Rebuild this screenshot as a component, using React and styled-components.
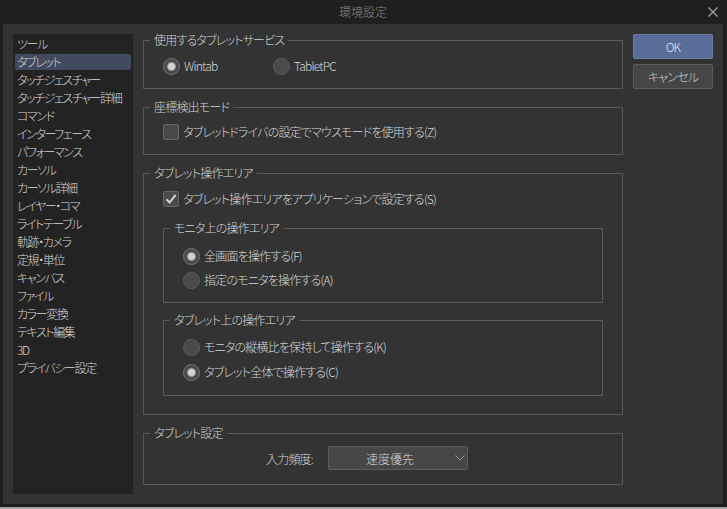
import React from "react";
import styled, { createGlobalStyle } from "styled-components";

const GlobalStyle = createGlobalStyle`
  html, body { margin: 0; padding: 0; background: #a4a4a4; }
  body {
    font-family: "Noto Sans CJK JP", "Noto Sans", sans-serif;
    font-size: 12px;
    font-weight: 300;
    font-feature-settings: "palt";
    letter-spacing: -0.8px;
    color: #d4d4d4;
  }
  * { box-sizing: border-box; }
`;

const Window = styled.div`
  width: 727px;
  height: 507px;
  background: #1f1f1f;
  padding: 0 4px 3px 3px;
  display: flex;
  flex-direction: column;
`;

const TitleBar = styled.div`
  height: 24px;
  display: grid;
  grid-template-columns: 1fr auto 1fr;
  align-items: center;
`;

const Title = styled.div`
  grid-column: 2;
  color: #8a8a8a;
  font-size: 12px;
  line-height: 24px;
  letter-spacing: 0;
`;

const CloseButton = styled.div`
  grid-column: 3;
  justify-self: end;
  width: 20px;
  height: 24px;
  display: flex;
  align-items: center;
  justify-content: center;
`;

const Body = styled.div`
  flex: 1;
  background: #333333;
  display: flex;
  gap: 10px;
  padding: 8px 10px 10px 10px;
`;

const Sidebar = styled.div`
  width: 120px;
  flex-shrink: 0;
  margin-top: 2px;
  background: #232323;
  display: flex;
  flex-direction: column;
  gap: 2px;
  padding-top: 2px;
`;

const NavItem = styled.div`
  height: 16px;
  line-height: 16px;
  margin: 0 2px;
  padding-left: 2px;
  border-radius: 2px;
  white-space: nowrap;
  letter-spacing: -1.4px;
  color: #d8d8d8;
  background: ${(p) => (p.$selected ? "#414a5e" : "transparent")};
`;

const Main = styled.div`
  width: 480px;
  flex-shrink: 0;
  display: flex;
  flex-direction: column;
  gap: 10px;
`;

const Group = styled.fieldset`
  margin: 0;
  padding: 0;
  border: 1px solid #5a5a5a;
  min-width: 0;
`;

const Legend = styled.legend`
  margin-left: 6px;
  padding: 0 4px;
  height: 16px;
  line-height: 16px;
  color: #d4d4d4;
  white-space: nowrap;
`;

const Content = styled.div`
  display: flex;
  flex-direction: column;
  gap: ${(p) => p.$gap ?? 0}px;
  padding: ${(p) => p.$pt}px 19px ${(p) => p.$pb}px 19px;
`;

const OptionRow = styled.div`
  display: flex;
  align-items: center;
`;

const Option = styled.label`
  display: flex;
  align-items: center;
  gap: 4px;
  height: 16px;
  min-width: ${(p) => p.$minWidth ?? 0}px;
  white-space: nowrap;
  color: #d8d8d8;
  line-height: 16px;
`;

const RadioOuter = styled.span`
  width: 17px;
  height: 17px;
  border-radius: 50%;
  flex-shrink: 0;
  background: #4a4a4a;
  border: 1px solid ${(p) => (p.$checked ? "#767676" : "#5e5e5e")};
  display: flex;
  align-items: center;
  justify-content: center;
`;

const RadioDot = styled.span`
  width: 9px;
  height: 9px;
  border-radius: 50%;
  background: #d2d2d2;
  border: 1px solid #9a9a9a;
`;

const CheckBox = styled.span`
  width: 16px;
  height: 16px;
  flex-shrink: 0;
  border-radius: 2px;
  background: #4a4a4a;
  border: 1px solid #666666;
  display: flex;
  align-items: center;
  justify-content: center;
`;

const SettingRow = styled.div`
  display: flex;
  align-items: center;
  gap: 15px;
`;

const SettingLabel = styled.div`
  width: 150px;
  text-align: right;
  color: #d4d4d4;
  white-space: nowrap;
`;

const Select = styled.div`
  width: 140px;
  height: 24px;
  border-radius: 2px;
  background: #474747;
  border: 1px solid #5c5c5c;
  display: flex;
  align-items: center;
  gap: 4px;
  padding: 0 2px 0 0;
  color: #d6d6d6;
  letter-spacing: 0;
`;

const SelectValue = styled.span`
  flex: 1;
  text-align: center;
`;

const Buttons = styled.div`
  width: 80px;
  flex-shrink: 0;
  margin-top: 2px;
  display: flex;
  flex-direction: column;
  gap: 5px;
`;

const Button = styled.div`
  height: 25px;
  border-radius: 2px;
  display: flex;
  align-items: center;
  justify-content: center;
  color: ${(p) => (p.$primary ? "#e6e6e6" : "#d0d0d0")};
  background: ${(p) => (p.$primary ? "#5a6d98" : "#464646")};
  border: 1px solid ${(p) => (p.$primary ? "#6a7ca4" : "#5c5c5c")};
`;

const Radio = ({ checked, label, minWidth }) => (
  <Option $minWidth={minWidth}>
    <RadioOuter $checked={checked}>{checked && <RadioDot />}</RadioOuter>
    {label}
  </Option>
);

const Check = ({ checked, label }) => (
  <Option>
    <CheckBox>
      {checked && (
        <svg width="14" height="14" viewBox="0 0 14 14">
          <path d="M2.5 7.2 L5.6 10.5 L11.6 2.8" fill="none" stroke="#d4d4d4" strokeWidth="2" />
        </svg>
      )}
    </CheckBox>
    {label}
  </Option>
);

const navItems = [
  "ツール",
  "タブレット",
  "タッチジェスチャー",
  "タッチジェスチャー詳細",
  "コマンド",
  "インターフェース",
  "パフォーマンス",
  "カーソル",
  "カーソル詳細",
  "レイヤー・コマ",
  "ライトテーブル",
  "軌跡・カメラ",
  "定規・単位",
  "キャンバス",
  "ファイル",
  "カラー変換",
  "テキスト編集",
  "3D",
  "プライバシー設定",
];

export default function App() {
  return (
    <>
      <GlobalStyle />
      <Window>
        <TitleBar>
          <Title>環境設定</Title>
          <CloseButton>
            <svg width="10" height="10" viewBox="0 0 10 10">
              <path d="M0.5 0.5 L9.5 9.5 M9.5 0.5 L0.5 9.5" stroke="#a8a8a8" strokeWidth="1.1" />
            </svg>
          </CloseButton>
        </TitleBar>
        <Body>
          <Sidebar>
            {navItems.map((n) => (
              <NavItem key={n} $selected={n === "タブレット"}>
                {n}
              </NavItem>
            ))}
          </Sidebar>
          <Main>
            <Group>
              <Legend>使用するタブレットサービス</Legend>
              <Content $pt={10} $pb={14}>
                <OptionRow>
                  <Radio checked label="Wintab" minWidth={110} />
                  <Radio label="TabletPC" />
                </OptionRow>
              </Content>
            </Group>
            <Group>
              <Legend>座標検出モード</Legend>
              <Content $pt={9} $pb={14}>
                <Check label="タブレットドライバの設定でマウスモードを使用する(Z)" />
              </Content>
            </Group>
            <Group>
              <Legend>タブレット操作エリア</Legend>
              <Content $pt={10} $pb={18}>
                <Check checked label="タブレット操作エリアをアプリケーションで設定する(S)" />
                <Group style={{ marginTop: 13 }}>
                  <Legend>モニタ上の操作エリア</Legend>
                  <Content $pt={12} $pb={14} $gap={8}>
                    <Radio checked label="全画面を操作する(F)" />
                    <Radio label="指定のモニタを操作する(A)" />
                  </Content>
                </Group>
                <Group style={{ marginTop: 9 }}>
                  <Legend>タブレット上の操作エリア</Legend>
                  <Content $pt={11} $pb={15} $gap={9}>
                    <Radio label="モニタの縦横比を保持して操作する(K)" />
                    <Radio checked label="タブレット全体で操作する(C)" />
                  </Content>
                </Group>
              </Content>
            </Group>
            <Group>
              <Legend>タブレット設定</Legend>
              <Content $pt={5} $pb={14}>
                <SettingRow>
                  <SettingLabel>入力頻度:</SettingLabel>
                  <Select>
                    <SelectValue>速度優先</SelectValue>
                    <svg width="10" height="6" viewBox="0 0 10 6">
                      <path d="M0.5 0.5 L5 5 L9.5 0.5" fill="none" stroke="#9a9a9a" strokeWidth="1" />
                    </svg>
                  </Select>
                </SettingRow>
              </Content>
            </Group>
          </Main>
          <Buttons>
            <Button $primary>OK</Button>
            <Button>キャンセル</Button>
          </Buttons>
        </Body>
      </Window>
    </>
  );
}
